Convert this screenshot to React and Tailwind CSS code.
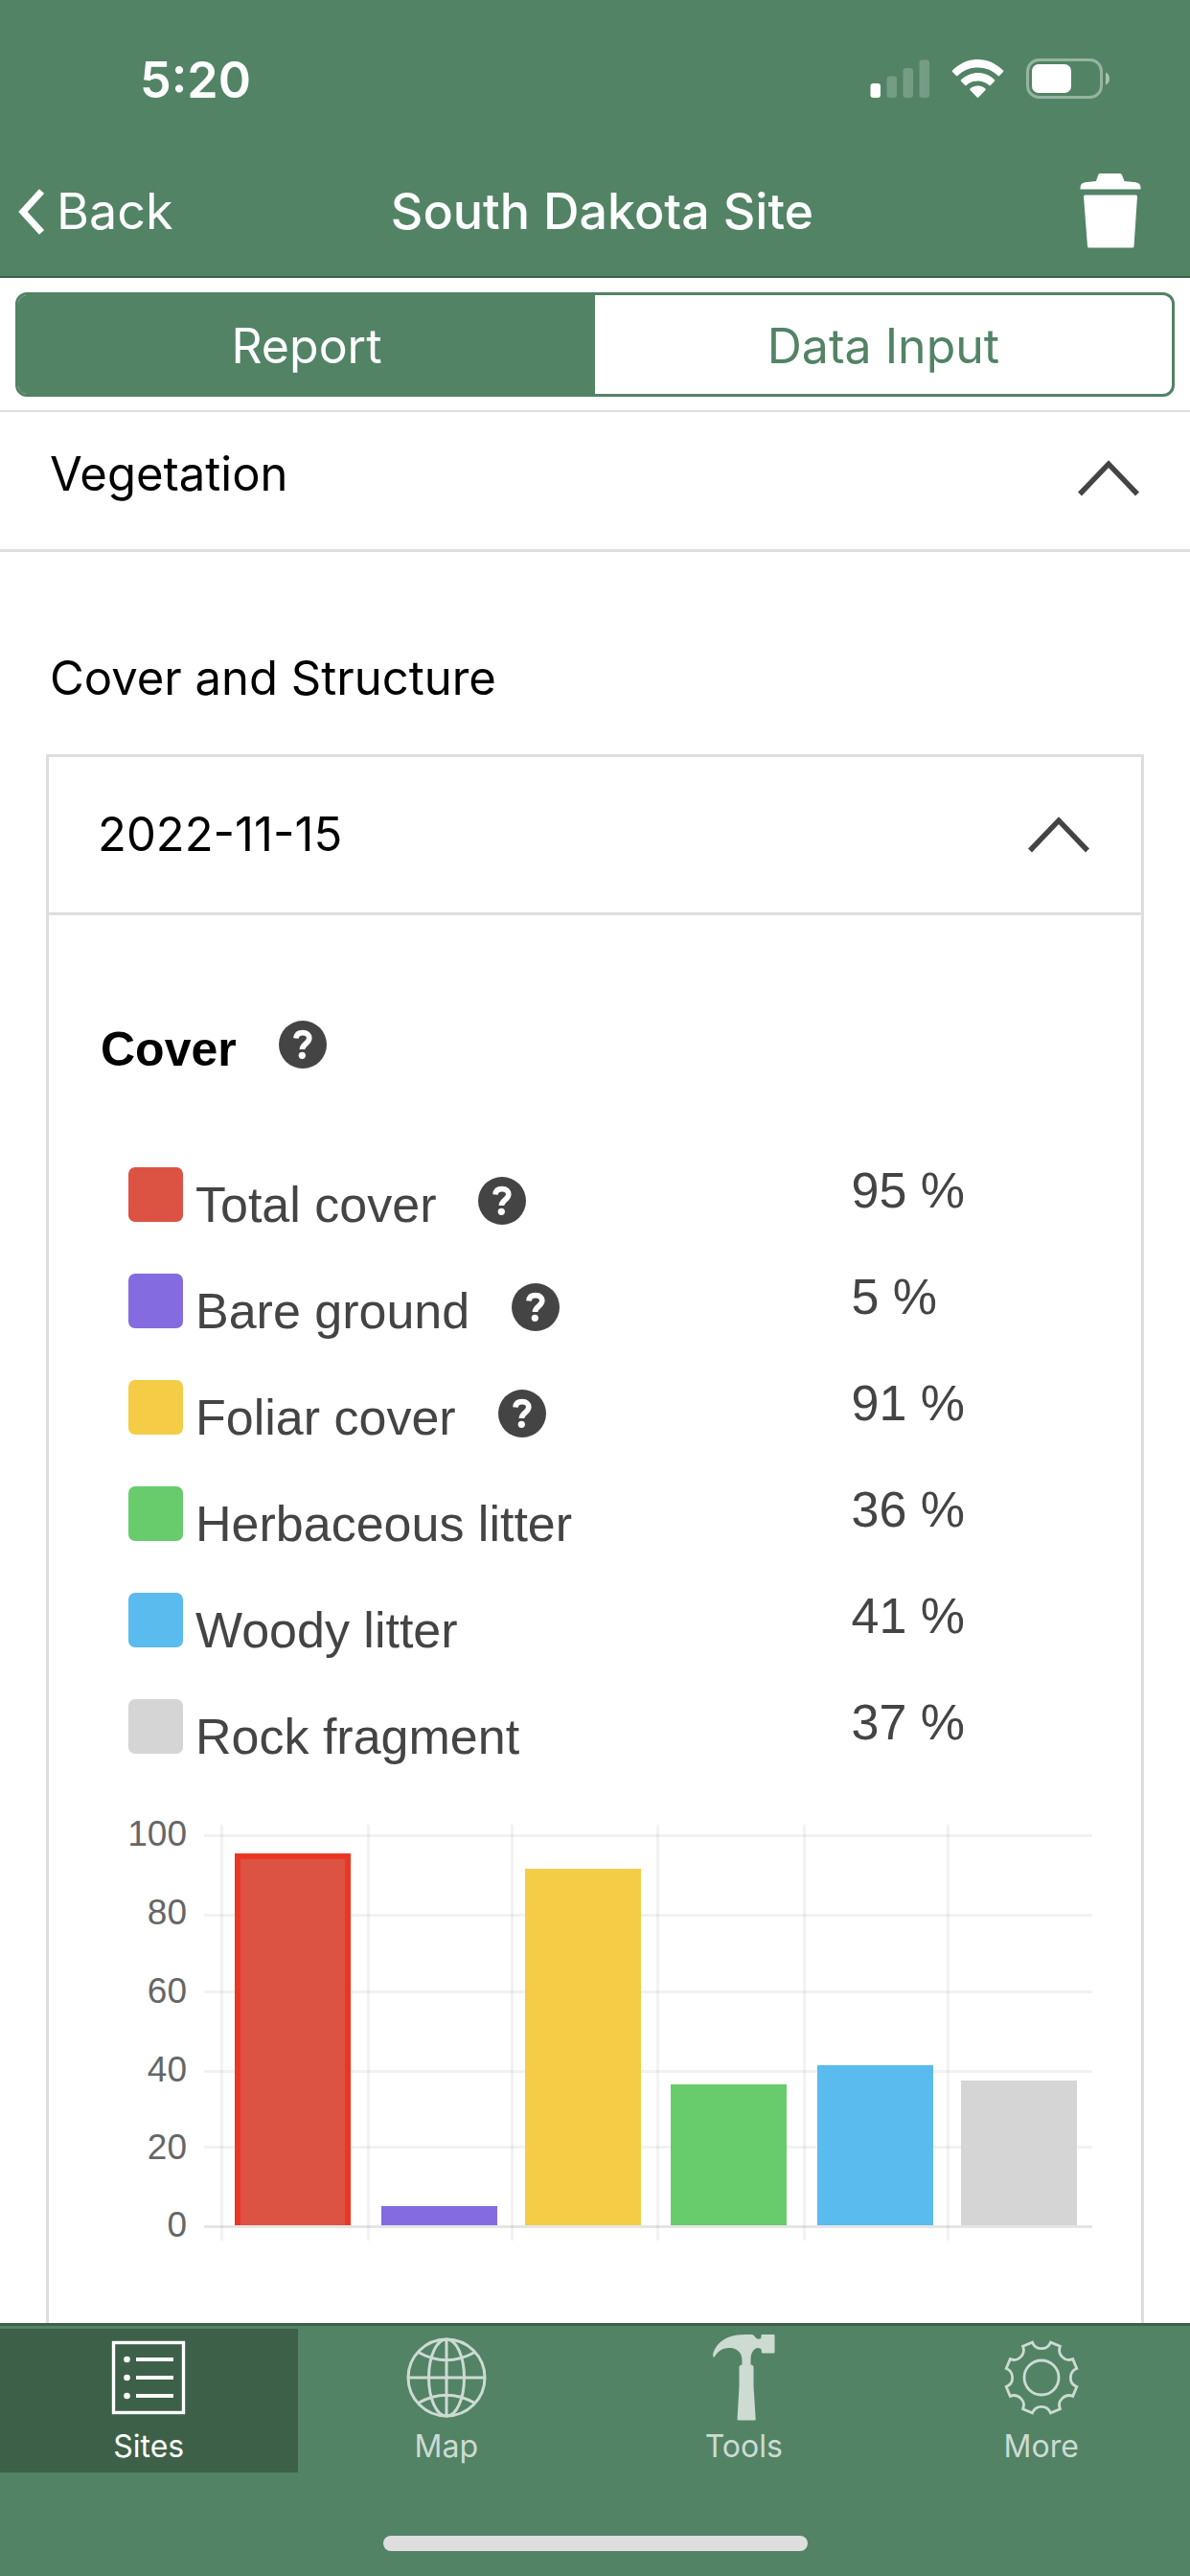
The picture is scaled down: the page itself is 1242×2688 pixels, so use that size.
import React from "react";

const COVER = [
  { label: "Total cover", value: 95, help: true, swatch: "bg-[#dc5344]", fill: "#dc5344", x: 140 },
  { label: "Bare ground", value: 5, help: true, swatch: "bg-[#846ce0]", fill: "#846ce0", x: 293 },
  { label: "Foliar cover", value: 91, help: true, swatch: "bg-[#f5cc46]", fill: "#f5cc46", x: 443 },
  { label: "Herbaceous litter", value: 36, swatch: "bg-[#68cb6c]", fill: "#68cb6c", x: 595 },
  { label: "Woody litter", value: 41, swatch: "bg-[#5abbee]", fill: "#5abbee", x: 748 },
  { label: "Rock fragment", value: 37, swatch: "bg-[#d5d5d5]", fill: "#d5d5d5", x: 898 },
];

const TICKS = [
  { value: 100, line: 30, text: 42 },
  { value: 80, line: 113, text: 124 },
  { value: 60, line: 193, text: 206 },
  { value: 40, line: 276, text: 288 },
  { value: 20, line: 355, text: 369 },
  { value: 0, line: 438, text: 450 },
];

const BASELINE = 438;

const COLUMNS = [125, 278, 428, 580, 733, 883];

function HelpButton({ topic }) {
  return (
    <button type="button" aria-label={`Help: ${topic}`} className="h-[50px] w-[50px] shrink-0">
      <svg viewBox="0 0 50 50" className="h-full w-full" fill="none">
        <circle cx="25" cy="25" r="25" fill="#444" />
        <path d="M18 18.500C18.300 14.600 21 12.600 25 12.600c4.200 0 6.800 2.200 6.800 5.700 0 5.700-7.200 5.600-7.400 11.700" stroke="#fff" strokeWidth="5.600" />
        <circle cx="24.300" cy="36.300" r="3.600" fill="#fff" />
      </svg>
    </button>
  );
}

function ChevronUp() {
  return (
    <svg viewBox="0 0 64 38" className="h-[38px] w-[64px] shrink-0" fill="none" stroke="#444" strokeWidth="5.500" aria-hidden="true">
      <path d="M2 35.500 32 4.200 62 35.500" />
    </svg>
  );
}

function StatusBar() {
  return (
    <div className="flex h-[158px] items-start justify-between pt-[56px] pr-[84px] pl-[146px]">
      <span className="text-[52px] leading-[56px] font-semibold">5:20</span>
      <svg viewBox="0 0 250 42" className="mt-[5px] h-[42px] w-[250px]" fill="#fff" aria-hidden="true">
        <rect x="0.500" y="26" width="10.500" height="15" rx="3" />
        <g opacity="0.2">
          <rect x="17.500" y="18.500" width="10.500" height="22.500" rx="3" />
          <rect x="34.500" y="10" width="10.500" height="31" rx="3" />
          <rect x="51.500" y="1.500" width="10.500" height="39.500" rx="3" />
        </g>
        <path d="M86 12.500C94 4.800 103 1 112.500 1s18.500 3.800 26.500 11.500q.6.700 0 1.400l-4 4.200q-.7.600-1.500 0c-6-5.800-13-8.600-21-8.600s-15 2.800-21 8.600q-.8.600-1.500 0l-4-4.200q-.6-.7 0-1.400z" />
        <path d="M95 22.300c5-4.700 11-7.200 17.500-7.200s12.500 2.500 17.500 7.200q.6.700 0 1.400l-4.200 4.200q-.7.600-1.400 0c-3.500-3-7.400-4.500-11.900-4.500s-8.400 1.500-11.900 4.500q-.7.600-1.400 0L95 23.700q-.6-.7 0-1.400z" />
        <path d="M104.500 31.500c2.300-2 5-3 8-3s5.700 1 8 3q.7.800 0 1.500l-7.200 7.500q-.8.700-1.600 0l-7.200-7.500q-.7-.7 0-1.500z" />
        <rect x="164.500" y="1.500" width="77" height="39" rx="12" fill="none" stroke="#fff" strokeOpacity="0.4" strokeWidth="3" />
        <rect x="169" y="6" width="41" height="30" rx="7" />
        <path d="M246 14.500c2.600 1.200 4 3.600 4 6.500s-1.400 5.300-4 6.500z" opacity="0.500" />
      </svg>
    </div>
  );
}

function NavBar() {
  return (
    <div className="grid h-[130px] grid-cols-[1fr_auto_1fr] items-start pt-[23px] pr-[51px] pl-[18px] text-[52px] leading-[80px]">
      <a href="#back" className="flex items-center gap-[13px] justify-self-start">
        <svg viewBox="0 0 28 48" className="h-[48px] w-[28px]" fill="none" stroke="#fff" strokeWidth="7" aria-hidden="true">
          <path d="M25.500 2.500 6 24l19.500 21.500" />
        </svg>
        <span>Back</span>
      </a>
      <h1 className="pl-12 font-medium">South Dakota Site</h1>
      <button type="button" aria-label="Delete site" className="justify-self-end">
        <svg viewBox="0 0 64 78" className="h-[78px] w-[64px]" fill="#fff" aria-hidden="true">
          <path d="M21 0h21q1.500 0 2 1.500l2.500 6.500 12 1.200Q63.500 10 63.500 15v1.500H.5V15q0-5 5-5.800L17 8l2.200-6.500q.5-1.500 1.800-1.500z" />
          <path d="M5.500 22.500h53q1.500 0 1.500 1.500l-3.500 52q0 1.500-1.500 1.500H9.500Q8 77.500 8 76L4 24q0-1.500 1.500-1.500z" />
        </svg>
      </button>
    </div>
  );
}

function CoverChart() {
  return (
    <svg viewBox="0 0 1035 470" className="block h-auto w-full" role="img" aria-label="Cover percentages">
      {TICKS.map((t) => (
        <g key={t.value}>
          <rect x="108" y={t.line} width="927" height="3" fill="#000" opacity={t.value === 0 ? 0.1 : 0.05} />
          <text x="90" y={t.text} textAnchor="end" fill="#666" className="font-['Liberation_Sans',sans-serif] text-[37px]">
            {t.value}
          </text>
        </g>
      ))}
      {COLUMNS.map((x) => (
        <rect key={x} x={x} y="20" width="3" height="434" fill="#000" opacity="0.05" />
      ))}
      {COVER.map((c, i) => {
        const h = Math.round(c.value * 4.085);
        return (
          <g key={c.label}>
            <rect x={c.x} y={BASELINE - h} width="121" height={h} fill={c.fill} />
            {i === 0 && (
              <path d={`M${c.x + 3} ${BASELINE}V${BASELINE - h + 3}h115V${BASELINE}`} fill="none" stroke="#ea3723" strokeWidth="6" />
            )}
          </g>
        );
      })}
    </svg>
  );
}

const TAB_ICON = "h-[90px] w-[90px]";

const TABS = [
  {
    label: "Sites",
    active: true,
    icon: (
      <svg viewBox="-45 -45 90 90" className={TAB_ICON} fill="none" stroke="currentColor" aria-hidden="true">
        <rect x="-36.500" y="-36.500" width="73" height="73" strokeWidth="3.400" />
        <path d="M-13-19h39M-13 0h39M-13 19h39" strokeWidth="4" />
        <g fill="currentColor" stroke="none">
          <circle cx="-22.500" cy="-19" r="3.300" />
          <circle cx="-22.500" cy="0" r="3.300" />
          <circle cx="-22.500" cy="19" r="3.300" />
        </g>
      </svg>
    ),
  },
  {
    label: "Map",
    icon: (
      <svg viewBox="-45 -45 90 90" className={TAB_ICON} fill="none" stroke="currentColor" strokeWidth="3" aria-hidden="true">
        <circle r="40" />
        <ellipse rx="18.500" ry="40" />
        <path d="M0-40V40M-40 0H40M-29.500-26.500Q0-10 29.500-26.500M-29.500 26.500Q0 10 29.500 26.500" />
      </svg>
    ),
  },
  {
    label: "Tools",
    icon: (
      <svg viewBox="-13 0 90 90" className={TAB_ICON} fill="currentColor" aria-hidden="true">
        <path d="M.5 23.500Q-.2 21 .5 19C5 6 17 0 34 0h6q2 0 3 1.200 2.500 3.500 4.500 3.500 2.500 0 3-1.500V1q0-1 1-1h12q1 0 1 1v17.500q0 1-1 1H52q-1 0-1.200-1V16Q50 14 47 14c-4 0-7.500 5-7.500 12v5.500q3 .5 3 2.500v20l2.200 34.500q0 1-1 1H26.500q-1 0-1-1L27.500 54V34q0-2 3-2.500V27C30.500 19 25 14 17 14 9.500 14 5 18 1.500 23.500q-.5.700-1 0z" />
      </svg>
    ),
  },
  {
    label: "More",
    icon: (
      <svg viewBox="-45 -45 90 90" className={TAB_ICON} fill="none" stroke="currentColor" strokeWidth="2.800" aria-hidden="true">
        <circle r="18" />
        <path d="M-9.500-36.800A10.200 10.200 0 0 0 9.500-36.800L19.400-32.700A10.200 10.200 0 0 0 32.700-19.400L36.800-9.500A10.200 10.200 0 0 0 36.800 9.500L32.700 19.400A10.200 10.200 0 0 0 19.400 32.700L9.500 36.800A10.200 10.200 0 0 0-9.500 36.800L-19.400 32.700A10.200 10.200 0 0 0-32.700 19.400L-36.800 9.500A10.200 10.200 0 0 0-36.800-9.500L-32.700-19.400A10.200 10.200 0 0 0-19.400-32.700Z" />
      </svg>
    ),
  },
];

export default function App() {
  return (
    <div className="flex min-h-screen flex-col bg-white font-['Inter',sans-serif] text-black">
      <header className="border-b-2 border-[#3d6048] bg-[#528365] text-white">
        <StatusBar />
        <NavBar />
      </header>

      <main className="flex flex-1 flex-col">
        <div className="border-b-2 border-[#dedede] px-4 pt-[15px] pb-[14px]">
          <div className="grid h-[109px] grid-cols-2 overflow-hidden rounded-xl border-3 border-[#528365] text-[50px]">
            <button type="button" aria-pressed="true" className="bg-[#528365] pt-[3px] text-white">Report</button>
            <button type="button" aria-pressed="false" className="pt-[3px] text-[#528365]">Data Input</button>
          </div>
        </div>

        <button type="button" className="flex h-[146px] items-start justify-between border-b-3 border-[#dedede] pt-[33px] pr-[53px] pl-[52px] text-left text-[49px] leading-[64px]">
          <span>Vegetation</span>
          <span className="mt-[17px]"><ChevronUp /></span>
        </button>

        <section className="flex flex-1 flex-col px-12 pt-[100px]">
          <h2 className="pl-1 text-[49px] leading-[64px]">Cover and Structure</h2>

          <div className="mt-[47px] flex-1 border-x-3 border-t-3 border-[#dedede]">
            <button type="button" className="flex h-[165px] w-full items-center justify-between border-b-3 border-[#dedede] pr-[54px] pl-[51px] text-left text-[49px] leading-[64px]">
              <span>2022-11-15</span>
              <ChevronUp />
            </button>

            <div className="pt-[110px] pr-[51px] pl-[54px] font-['Liberation_Sans',sans-serif] text-[52px]">
              <div className="flex items-start gap-[44px]">
                <h3 className="text-[50px] leading-[60px] font-bold">Cover</h3>
                <HelpButton topic="Cover" />
              </div>

              <div className="mt-[93px] pl-[29px] text-[#444]">
                <table className="w-full table-fixed">
                  <tbody>
                    {COVER.map((c) => (
                      <tr key={c.label} className="h-[111px]">
                        <th scope="row" className="w-3/4 p-0 align-top font-normal">
                          <div className="flex items-start">
                            <span className={`${c.swatch} h-[57px] w-[57px] shrink-0 rounded-[7px]`} />
                            <span className="ml-[13px] leading-[78px]">{c.label}</span>
                            {c.help && (
                              <span className="mt-[10px] ml-[44px] flex">
                                <HelpButton topic={c.label} />
                              </span>
                            )}
                          </div>
                        </th>
                        <td className="p-0 align-top leading-[48px]">{c.value} %</td>
                      </tr>
                    ))}
                  </tbody>
                </table>
              </div>

              <CoverChart />
            </div>
          </div>
        </section>
      </main>

      <footer className="border-t-3 border-[#3d6048] bg-[#528365] pt-[3px]">
        <nav className="grid grid-cols-4">
          {TABS.map((t) => (
            <a
              key={t.label}
              href={`#${t.label.toLowerCase()}`}
              aria-current={t.active ? "page" : undefined}
              className={`${t.active ? "bg-[#3d6048] text-white" : "text-[#cddbd3]"} flex h-[150px] flex-col items-center pt-[6px] text-[32px]`}
            >
              {t.icon}
              <span className="mt-[7px] leading-[40px]">{t.label}</span>
            </a>
          ))}
        </nav>
        <div className="mx-auto mt-[66px] mb-[26px] h-4 w-[443px] rounded-full bg-[#dedede]" />
      </footer>
    </div>
  );
}
